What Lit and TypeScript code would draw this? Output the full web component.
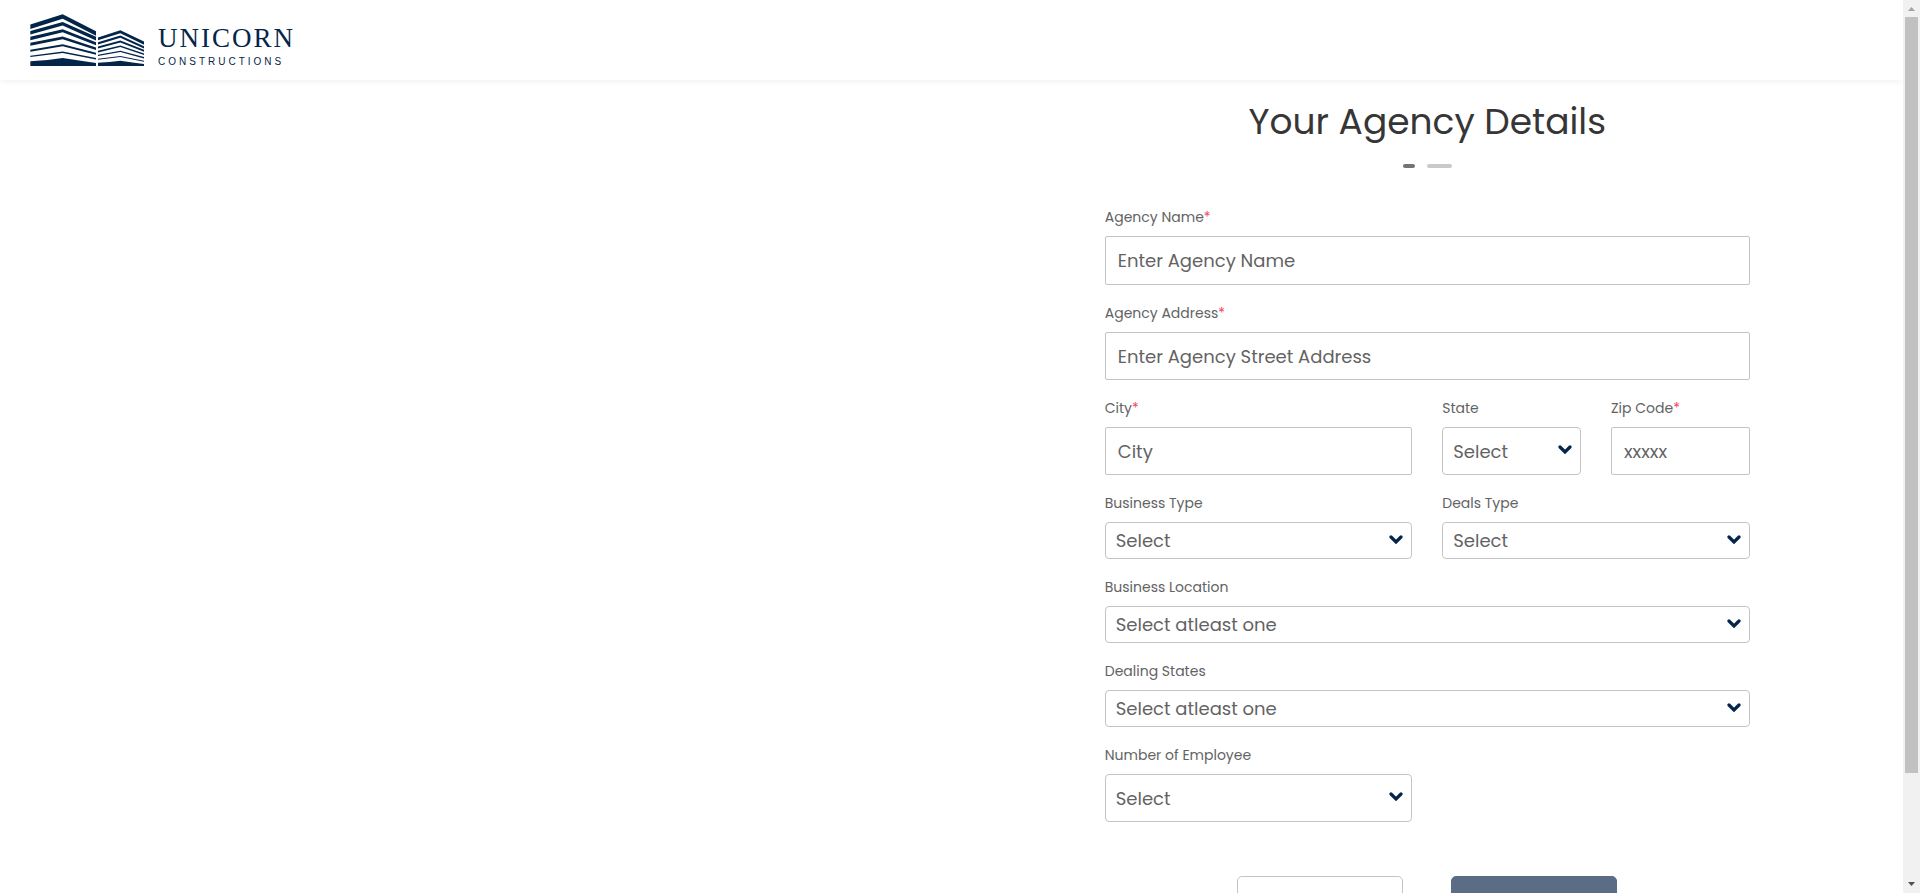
import { LitElement, html, css, svg } from "lit";
import { customElement } from "lit/decorators.js";

interface Field {
  id: string;
  label: string;
  hint: string;
  kind: "input" | "select";
  size: "full" | "half" | "quarter";
  required?: boolean;
  slim?: boolean;
}

const FIELDS: Field[] = [
  { id: "agency-name", label: "Agency Name", hint: "Enter Agency Name", kind: "input", size: "full", required: true },
  { id: "agency-address", label: "Agency Address", hint: "Enter Agency Street Address", kind: "input", size: "full", required: true },
  { id: "city", label: "City", hint: "City", kind: "input", size: "half", required: true },
  { id: "state", label: "State", hint: "Select", kind: "select", size: "quarter" },
  { id: "zip", label: "Zip Code", hint: "xxxxx", kind: "input", size: "quarter", required: true },
  { id: "business-type", label: "Business Type", hint: "Select", kind: "select", size: "half", slim: true },
  { id: "deals-type", label: "Deals Type", hint: "Select", kind: "select", size: "half", slim: true },
  { id: "location", label: "Business Location", hint: "Select atleast one", kind: "select", size: "full", slim: true },
  { id: "dealing-states", label: "Dealing States", hint: "Select atleast one", kind: "select", size: "full", slim: true },
  { id: "employees", label: "Number of Employee", hint: "Select", kind: "select", size: "half" },
];

// One storey of a building: left, peak and right edges with their thicknesses.
const floor = (x: number[], y: number[], t: number[]) => svg`
  <polygon points="${x[0]},${y[0]} ${x[1]},${y[1]} ${x[2]},${y[2]} ${x[2]},${y[2] + t[2]} ${x[1]},${y[1] + t[1]} ${x[0]},${y[0] + t[0]}" />`;

const TALL = [31, 128, 228];
const LOW = [234, 301, 372];

@customElement("app-root")
export class AppRoot extends LitElement {
  static styles = css`
    :host {
      display: grid;
      grid-template-columns: minmax(0, 1fr) 17px;
      height: 100vh;
      overflow: hidden;
      background: #fff;
      color: #636363;
      font-family: Poppins, Inter, sans-serif;
    }
    * { box-sizing: border-box; }
    .page { overflow: hidden; }
    .header {
      height: 80px;
      padding: 0 30px;
      display: flex;
      align-items: center;
      box-shadow: 0 2px 6px rgba(0, 0, 0, 0.05);
    }
    .brand {
      display: flex;
      align-items: center;
      gap: 14px;
      color: #04254a;
      text-decoration: none;
    }
    .mark { width: 114px; height: 52px; fill: #04254a; }
    .words { display: grid; padding-top: 12px; }
    .name { font: 27px/32px "Liberation Serif", serif; letter-spacing: 2px; }
    .sub { font: 10px/16px "Liberation Sans", sans-serif; letter-spacing: 3px; }
    .columns { display: grid; grid-template-columns: 1fr 1fr; }
    .panel {
      grid-column: 2;
      width: 100%;
      max-width: 645px;
      margin: 0 auto;
      padding-top: 15px;
    }
    .title {
      margin: 0;
      text-align: center;
      font-weight: 400;
      font-size: 36px;
      line-height: 54px;
      color: #363636;
    }
    .steps { display: flex; justify-content: center; gap: 12px; padding: 15px 0 37px; }
    .step { width: 25px; height: 4px; border-radius: 2px; background: #c6cacd; }
    .step.now { width: 12px; background: #747474; }
    .fields { display: grid; grid-template-columns: repeat(4, 1fr); column-gap: 30px; }
    .field { display: flex; flex-direction: column; padding-bottom: 16px; }
    .full { grid-column: span 4; }
    .half { grid-column: span 2; }
    .label { font-size: 14px; line-height: 24px; padding-bottom: 7px; }
    .star { color: #f5455c; }
    .control {
      width: 100%;
      height: 48px;
      margin: 0;
      border: 1px solid #c4c4c4;
      border-radius: 2px;
      background: #fff;
      padding: 0 12px;
      font-family: inherit;
      font-size: 18px;
      color: #636363;
      appearance: none;
    }
    .control::placeholder { color: #636363; opacity: 1; }
    .select { border-radius: 4px; padding: 0 10px; }
    .slim { height: 37px; }
    .fields .field:first-child .control { height: 49px; }
    .picker { display: grid; align-items: center; }
    .picker > * { grid-area: 1 / 1; }
    .chevron {
      justify-self: end;
      width: 14px;
      height: 9px;
      margin: 0 9px 3px 0;
      fill: none;
      stroke: #04254a;
      stroke-width: 3.2;
      stroke-linecap: round;
      pointer-events: none;
    }
    .actions { display: flex; justify-content: center; gap: 48px; padding: 38px 0 40px; }
    .button {
      width: 166px;
      height: 48px;
      border: 1px solid #c4c4c4;
      border-radius: 5px;
      background: #fff;
    }
    .primary { border-color: #5a6d85; background: #5a6d85; }
    .scrollbar {
      display: flex;
      flex-direction: column;
      align-items: center;
      background: #f1f1f1;
    }
    .arrow { width: 17px; height: 17px; fill: #a3a3a3; flex: none; }
    .arrow.down { fill: #505050; }
    .track { flex: 1; width: 13px; }
    .thumb { height: 88%; background: #c1c1c1; }
  `;

  private control(f: Field) {
    if (f.kind === "input") {
      return html`<input class="control" id=${f.id} type="text" placeholder=${f.hint} />`;
    }
    return html`
      <div class="picker">
        <select class="control select ${f.slim ? "slim" : ""}" id=${f.id}>
          <option>${f.hint}</option>
        </select>
        <svg class="chevron" viewBox="0 0 14 9" aria-hidden="true"><path d="M2 2 7 7 12 2" /></svg>
      </div>`;
  }

  render() {
    return html`
      <div class="page">
        <header class="header">
          <a class="brand" href="#">
            <svg class="mark" viewBox="30 41 342 157" preserveAspectRatio="none" aria-hidden="true">
              ${floor(TALL, [73, 42, 93], [13, 13, 14])}
              ${floor(TALL, [92, 65, 110], [11, 11, 11])}
              ${floor(TALL, [110, 87, 126], [10, 9, 9])}
              ${floor(TALL, [128, 109, 142], [9, 8, 8])}
              ${floor(TALL, [149, 132, 158], [6, 6, 6])}
              ${floor(TALL, [167, 154, 174], [4, 5, 4])}
              <path d="M31 184Q80 182 128 174Q180 182 228 189V198H31Z" />
              ${floor(LOW, [112, 90, 124], [8, 9, 10])}
              ${floor(LOW, [126, 106, 138], [7, 7, 7])}
              ${floor(LOW, [139, 121, 149], [6, 6, 6])}
              ${floor(LOW, [152, 136, 160], [5, 5, 5])}
              ${floor(LOW, [164, 152, 171], [4, 4, 4])}
              ${floor(LOW, [176, 168, 182], [3, 3, 3])}
              <path d="M234 188Q268 187 301 182Q338 187 372 192V198H234Z" />
            </svg>
            <span class="words">
              <span class="name">UNICORN</span>
              <span class="sub">CONSTRUCTIONS</span>
            </span>
          </a>
        </header>
        <main class="columns">
          <form class="panel">
            <h1 class="title">Your Agency Details</h1>
            <div class="steps"><span class="step now"></span><span class="step"></span></div>
            <div class="fields">
              ${FIELDS.map((f) => html`
                <div class="field ${f.size}">
                  <label class="label" for=${f.id}>${f.label}${f.required ? html`<span class="star">*</span>` : ""}</label>
                  ${this.control(f)}
                </div>`)}
            </div>
            <div class="actions">
              <button class="button" type="button"></button>
              <button class="button primary" type="submit"></button>
            </div>
          </form>
        </main>
      </div>
      <div class="scrollbar" aria-hidden="true">
        <svg class="arrow" viewBox="0 0 17 17"><path d="M5 11 8.500 7 12 11Z" /></svg>
        <div class="track"><div class="thumb"></div></div>
        <svg class="arrow down" viewBox="0 0 17 17"><path d="M5 6 8.500 10 12 6Z" /></svg>
      </div>`;
  }
}
